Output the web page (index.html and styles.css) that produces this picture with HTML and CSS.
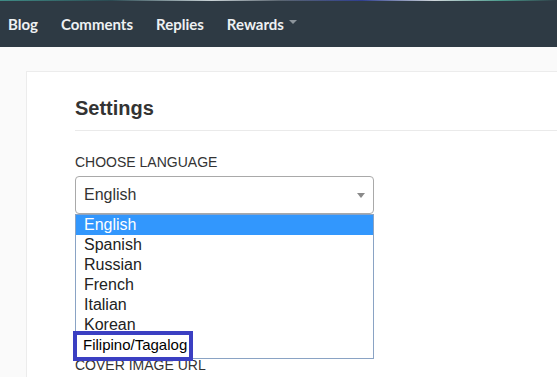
FILE: index.html
```html
<!DOCTYPE html>
<html lang="en">
<head>
<meta charset="utf-8">
<title>Settings</title>
<link rel="stylesheet" href="styles.css">
</head>
<body>
<div class="top-strip"></div>
<nav class="nav">
  <a class="nav-link" href="#">Blog</a>
  <a class="nav-link" href="#">Comments</a>
  <a class="nav-link" href="#">Replies</a>
  <a class="nav-link" href="#">Rewards<span class="caret"></span></a>
</nav>
<main class="page">
  <section class="card">
    <h1 class="title">Settings</h1>
    <hr class="divider">
    <div class="field">
      <label class="label">CHOOSE LANGUAGE</label>
      <div class="select-wrap">
        <div class="select"><span>English</span><span class="arrow"></span></div>
        <ul class="options">
          <li class="option selected">English</li>
          <li class="option">Spanish</li>
          <li class="option">Russian</li>
          <li class="option">French</li>
          <li class="option">Italian</li>
          <li class="option">Korean</li>
          <li class="option marked">Filipino/Tagalog</li>
        </ul>
      </div>
    </div>
    <div class="field field-cover">
      <label class="label">COVER IMAGE URL</label>
    </div>
  </section>
</main>
</body>
</html>
```

FILE: styles.css
```css
html, body {
  margin: 0;
  padding: 0;
}
body {
  background: #fafafa;
  overflow: hidden;
  font-family: "Liberation Sans", Arial, sans-serif;
  color: #333;
}
.top-strip {
  height: 1px;
  background: linear-gradient(90deg, #3f8c86 0%, #2b4a52 20%, #c9d2d6 38%, #5b6670 50%, #2f3f8f 65%, #cfd6da 78%, #4a9a8c 90%, #2e3a44 100%);
}
.nav {
  height: 46px;
  background: #2e3a44;
  display: flex;
  align-items: center;
  gap: 23px;
  padding-left: 8px;
}
.nav-link {
  font-family: Lato, "Open Sans", sans-serif;
  font-weight: 700;
  font-size: 15px;
  color: #eef1f3;
  text-decoration: none;
  display: flex;
  align-items: center;
}
.caret {
  display: inline-block;
  width: 0;
  height: 0;
  margin-left: 5px;
  margin-top: -4px;
  border-left: 4px solid transparent;
  border-right: 4px solid transparent;
  border-top: 4px solid #8c949b;
}
.page {
  padding: 24px 0 0 26px;
}
.card {
  width: 620px;
  height: 400px;
  background: #fff;
  border: 1px solid #ececec;
  padding: 24px 0 0 48px;
}
.title {
  margin: 0;
  font-size: 20px;
  line-height: 24px;
  font-weight: 700;
  color: #333;
}
.divider {
  margin: 10px 0 0 0;
  border: 0;
  border-top: 1px solid #eaeaea;
}
.field {
  margin-top: 23px;
}
.label {
  display: block;
  font-size: 14px;
  line-height: 16px;
  color: #333;
}
.select-wrap {
  position: relative;
  width: 299px;
  margin-top: 6px;
}
.select {
  box-sizing: border-box;
  height: 38px;
  border: 1px solid #a9a9a9;
  border-radius: 4px;
  padding: 0 8px;
  display: flex;
  align-items: center;
  justify-content: space-between;
  font-size: 16px;
  color: #333;
}
.arrow {
  width: 0;
  height: 0;
  border-left: 4px solid transparent;
  border-right: 4px solid transparent;
  border-top: 5px solid #8a8a8a;
}
.options {
  position: absolute;
  top: 100%;
  left: 0;
  right: 0;
  margin: 0;
  padding: 0 0 3px 0;
  list-style: none;
  background: #fff;
  border: 1px solid #8aa3c4;
  z-index: 2;
}
.option {
  position: relative;
  height: 20px;
  line-height: 20px;
  padding-left: 8px;
  font-size: 16px;
  color: #222;
}
.option.selected {
  background: #3297fd;
  color: #fff;
}
.option.marked {
  color: #000;
  padding-left: 7px;
  font-size: 15px;
}
.option.marked::after {
  content: "";
  position: absolute;
  left: -3px;
  top: -4px;
  width: 120px;
  height: 30px;
  box-sizing: border-box;
  border: 4px solid #3b3fc2;
}
.field-cover {
  margin-top: 143px;
}
```
